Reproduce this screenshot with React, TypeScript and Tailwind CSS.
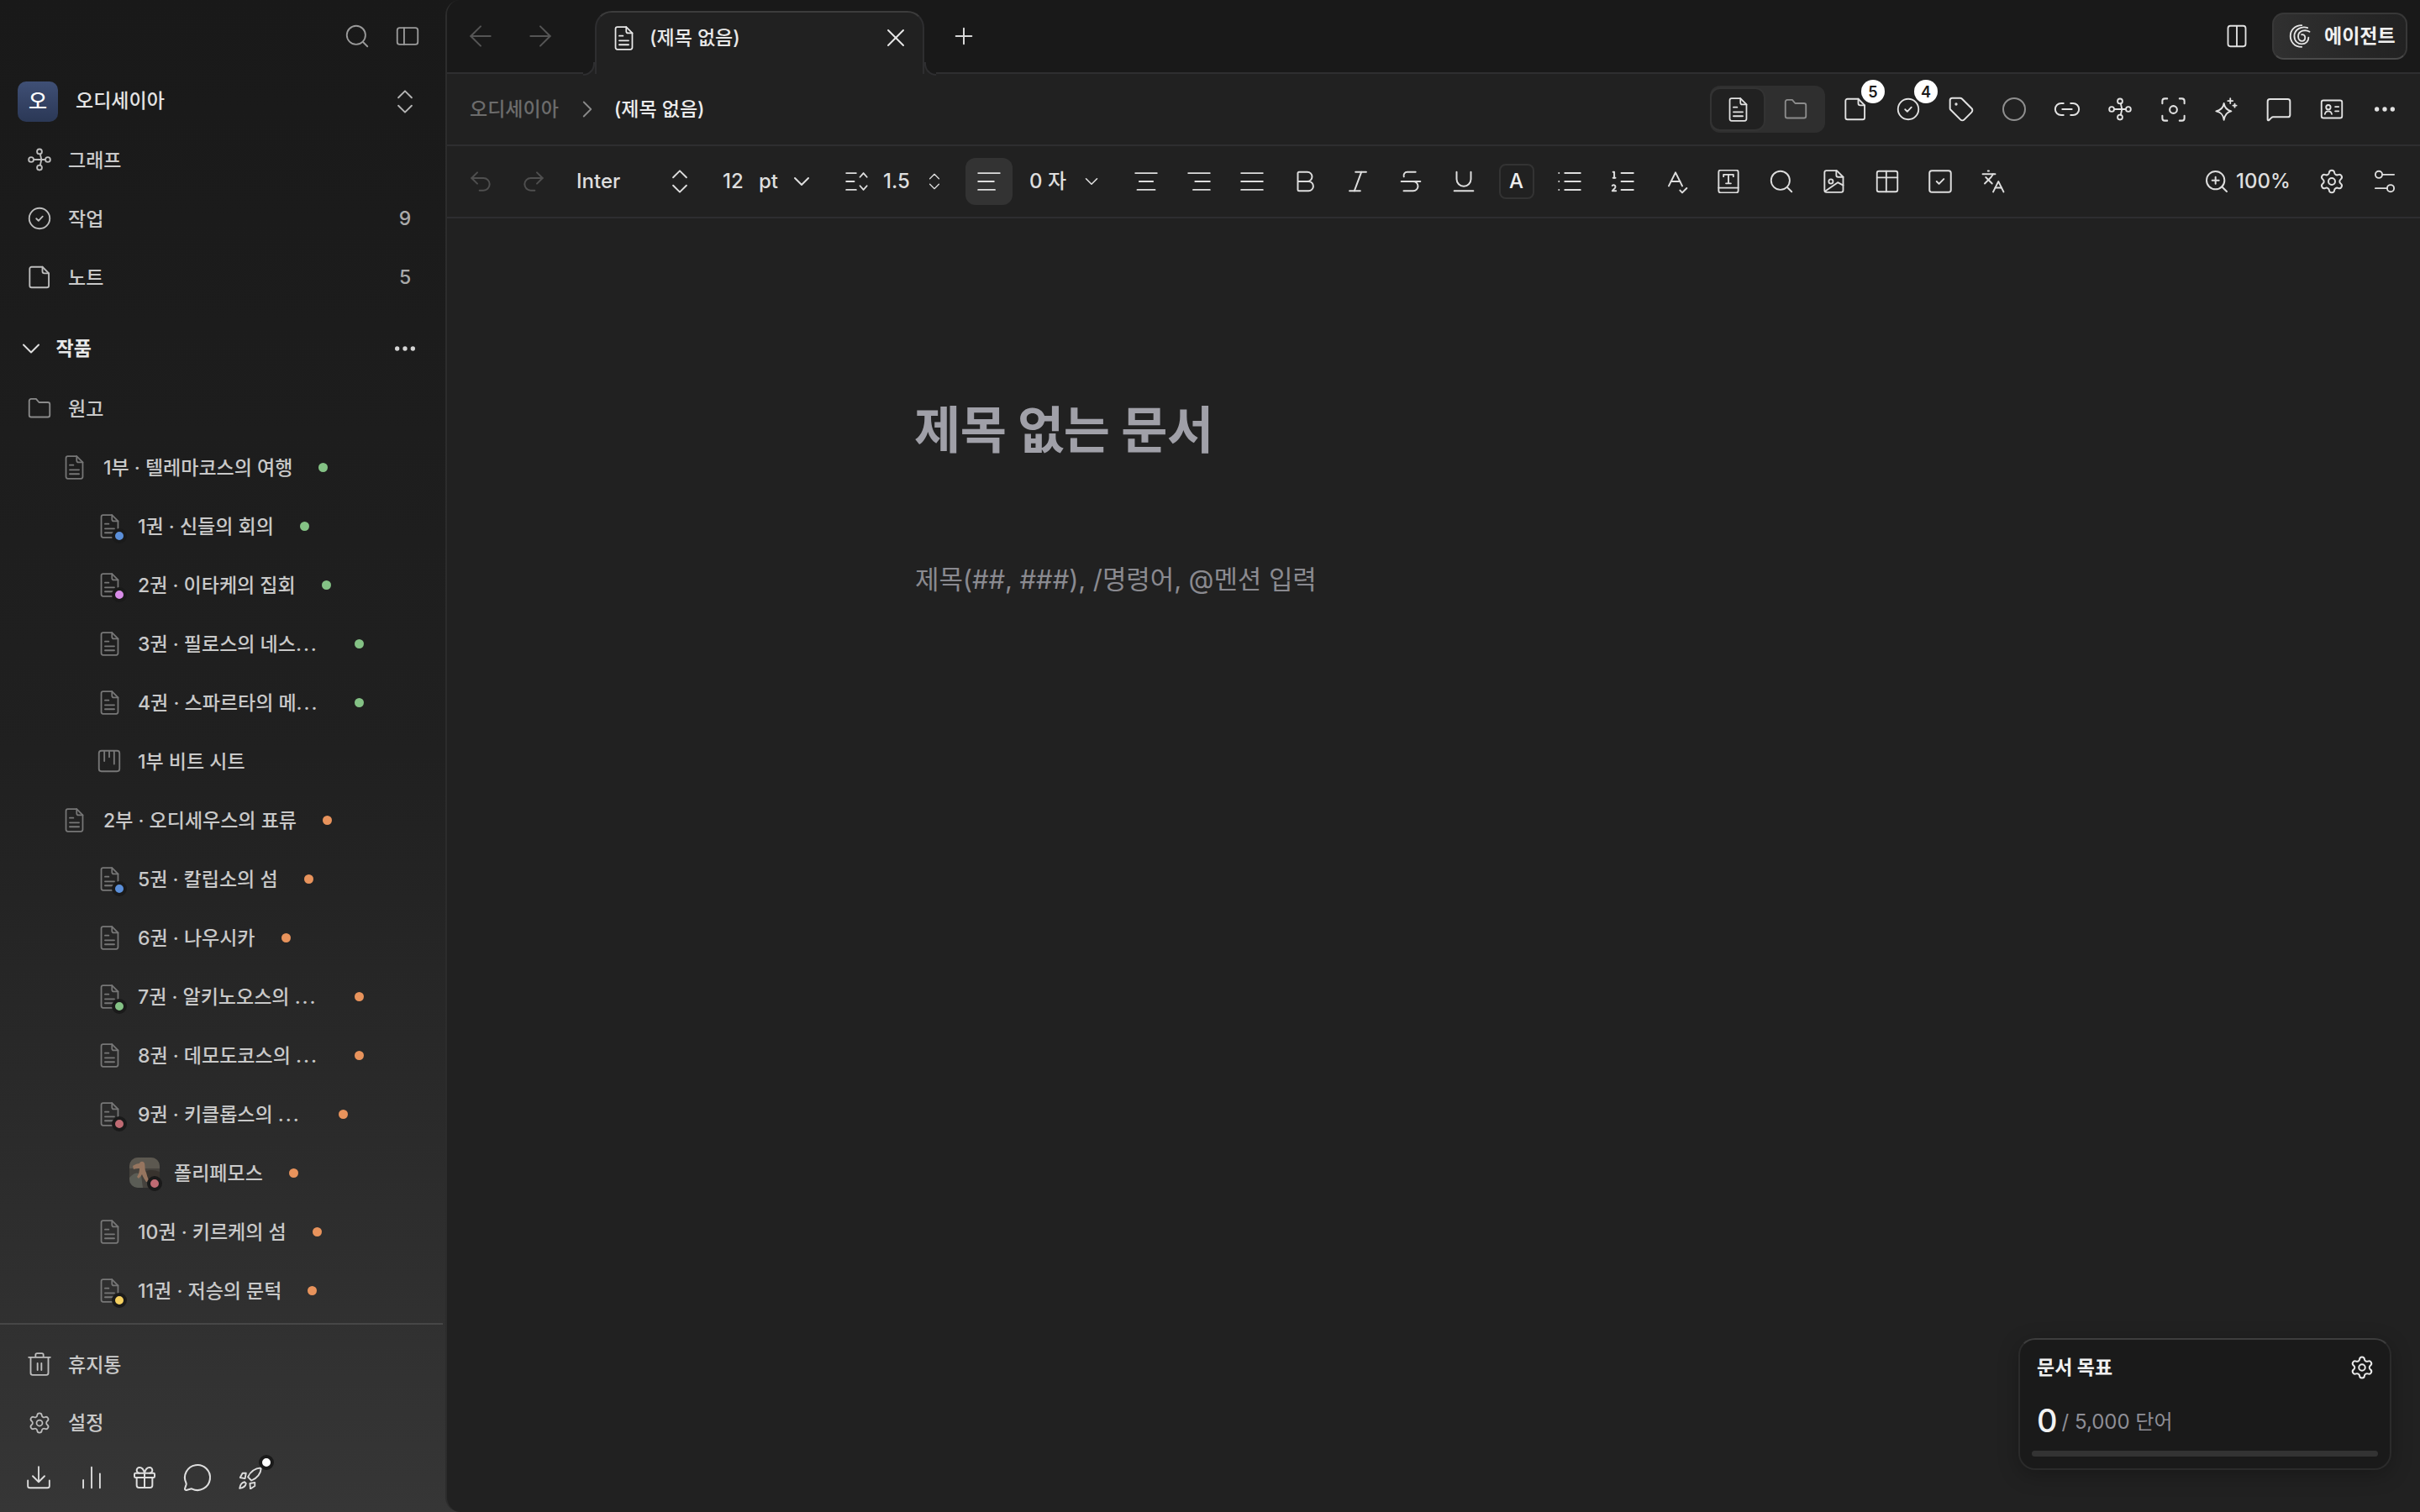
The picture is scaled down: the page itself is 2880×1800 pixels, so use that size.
import React from "react";
import {
  ArrowLeft,
  ArrowRight,
  Bold,
  ChevronDown,
  ChevronRight,
  ChevronsUpDown,
  Ellipsis,
  Focus,
  Gift,
  Italic,
  Languages,
  Link2,
  List,
  ListOrdered,
  MessageCircle,
  MessageSquare,
  Plus,
  Redo2,
  Settings,
  SpellCheck,
  SquareCheck,
  Strikethrough,
  Tag,
  Underline,
  Undo2,
  X,
  ZoomIn,
} from "lucide-react";

const Svg = ({ size = 28, className = "", vb = "0 0 24 24", children }: { size?: number; className?: string; vb?: string; children: React.ReactNode }) => (
  <svg width={size} height={size} viewBox={vb} fill="none" stroke="currentColor" strokeWidth={1.6} strokeLinecap="round" strokeLinejoin="round" className={`shrink-0 ${className}`}>
    {children}
  </svg>
);

const DocIcon = ({ className = "", size = 31 }: { className?: string; size?: number }) => (
  <Svg size={size} vb="0 0 24 28" className={className}>
    <path d="M5 2h9.500L21 8.500V24a2 2 0 0 1-2 2H5a2 2 0 0 1-2-2V4a2 2 0 0 1 2-2z" />
    <path d="M14.500 2v4.500a2 2 0 0 0 2 2H21" />
    <path d="M7 11.500h4M7 16.500h10M7 21h10" />
  </Svg>
);

const FileIcon = ({ className = "" }: { className?: string }) => (
  <Svg className={className}>
    <path d="M4 1.500h11L21.500 8v12.500a2 2 0 0 1-2 2H4a2 2 0 0 1-2-2v-17a2 2 0 0 1 2-2z" />
    <path d="M15 1.500V6a2 2 0 0 0 2 2h4.500" />
  </Svg>
);

const FolderIcon = ({ className = "" }: { className?: string }) => (
  <Svg className={className}>
    <path d="M1.500 4.500a2 2 0 0 1 2-2h5l3 3.500h9a2 2 0 0 1 2 2v11a2 2 0 0 1-2 2h-17a2 2 0 0 1-2-2z" />
  </Svg>
);

const CheckCircleIcon = ({ className = "" }: { className?: string }) => (
  <Svg className={className}>
    <circle cx="12" cy="12" r="10.500" />
    <path d="M8.800 12.200l2.200 2.200 4.200-4.400" />
  </Svg>
);

const GraphIcon = ({ className = "" }: { className?: string }) => (
  <Svg className={className}>
    <circle cx="12" cy="3.800" r="2.500" />
    <circle cx="3.500" cy="12" r="2.500" />
    <circle cx="20.500" cy="12" r="2.500" />
    <circle cx="12" cy="20.200" r="2.500" />
    <path d="M6 12h12M12.700 6.200l1.300 5.800-1.300 5.800" />
  </Svg>
);

const BeatIcon = ({ className = "" }: { className?: string }) => (
  <Svg className={className}>
    <rect x="1.500" y="1.500" width="21" height="21" rx="2.500" />
    <path d="M7 2v10M12 2v6M17 2v13" />
  </Svg>
);

const TrashIcon = ({ className = "" }: { className?: string }) => (
  <Svg className={className}>
    <path d="M1 5h22M8 5V2.500A1.500 1.500 0 0 1 9.500 1h5A1.500 1.500 0 0 1 16 2.500V5" />
    <path d="M3 5v16a2 2 0 0 0 2 2h14a2 2 0 0 0 2-2V5" />
    <path d="M10 11v7M14 11v7" />
  </Svg>
);

const DownloadIcon = ({ className = "" }: { className?: string }) => (
  <Svg className={className}>
    <path d="M12 1v15M6 10.500l6 6 6-6" />
    <path d="M1 15v5.500a2 2 0 0 0 2 2h18a2 2 0 0 0 2-2V15" />
  </Svg>
);

const BarsIcon = ({ className = "" }: { className?: string }) => (
  <Svg className={className}>
    <path d="M3.500 22.500v-8M12 22.500V1.500M20.500 22.500V8" />
  </Svg>
);

const RocketIcon = ({ className = "" }: { className?: string }) => (
  <Svg className={className}>
    <path d="M23 2c-6 .5-11 3.500-13.500 9.500l3.500 3.500c6-2.500 9.500-7 10-13z" />
    <path d="M7.500 7.500H4L1.500 12l5 1z" />
    <path d="M16.500 17v3.500L12 23.500 11.500 18z" />
    <path d="M6 16.500c-2.500.5-4.500 3-5 6.500 3.500-.5 6-2 6.500-5z" />
  </Svg>
);

const PanelIcon = ({ className = "" }: { className?: string }) => (
  <Svg className={className}>
    <rect x="1.500" y="3.500" width="21" height="17" rx="2.500" />
    <path d="M8.500 3.500v17" />
  </Svg>
);

const SearchIcon = ({ className = "" }: { className?: string }) => (
  <Svg className={className}>
    <circle cx="11" cy="11" r="9.500" />
    <path d="M18 18l4.500 4.500" />
  </Svg>
);

const AlignIcon = ({ kind, className = "" }: { kind: "left" | "center" | "right" | "justify"; className?: string }) => {
  const lines = {
    left: "M1 3.500h22M1 12h16M1 20.500h17",
    center: "M1 3.500h22M5 12h14M3 20.500h18",
    right: "M1 3.500h22M8 12h15M6 20.500h17",
    justify: "M1 3.500h22M1 12h22M1 20.500h22",
  };
  return (
    <Svg className={className}>
      <path d={lines[kind]} />
    </Svg>
  );
};

const LineSpacingIcon = ({ className = "" }: { className?: string }) => (
  <Svg className={className}>
    <path d="M1 3.500h10M1 12h8M1 20.500h10" />
    <path d="M15 7.500l3.500-4 3.500 4M15 16.500l3.500 4 3.500-4" />
  </Svg>
);

const BookTIcon = ({ className = "" }: { className?: string }) => (
  <Svg className={className}>
    <rect x="2" y="0.500" width="20" height="23" rx="2" />
    <path d="M2 18.500h20M7 5h10M7 5v2M17 5v2M12 5v9M9.500 14h5" />
  </Svg>
);

const ImageDocIcon = ({ className = "" }: { className?: string }) => (
  <Svg className={className}>
    <path d="M4 1h10.500L21 7.500V21a2 2 0 0 1-2 2H4a2 2 0 0 1-2-2V3a2 2 0 0 1 2-2z" />
    <path d="M14 1v4.500a2 2 0 0 0 2 2h5" />
    <circle cx="8.500" cy="12" r="2.200" />
    <path d="M2.500 22l13-9 5.500 3" />
  </Svg>
);

const TableIcon = ({ className = "" }: { className?: string }) => (
  <Svg className={className}>
    <rect x="1.500" y="1.500" width="21" height="21" rx="2" />
    <path d="M1.500 8h21M11 1.500v21" />
  </Svg>
);

const SlidersIcon = ({ className = "" }: { className?: string }) => (
  <Svg className={className}>
    <circle cx="6" cy="5" r="3.500" />
    <path d="M9.500 5h12" />
    <circle cx="18" cy="19" r="3.500" />
    <path d="M2.500 19h12" />
  </Svg>
);

const IdCardIcon = ({ className = "" }: { className?: string }) => (
  <Svg className={className}>
    <rect x="1.500" y="3" width="21" height="18" rx="2" />
    <circle cx="8.500" cy="10" r="2.300" />
    <path d="M5 17c.4-2 1.800-3 3.500-3s3.100 1 3.500 3M15.500 9.500h3.500M15.500 14h3.500" />
  </Svg>
);

const SparkleIcon = ({ className = "" }: { className?: string }) => (
  <Svg className={className}>
    <path d="M10 6c.7 4.500 2.800 7 7.500 8-4.700 1-6.800 3.500-7.500 9-.7-5.500-2.800-8-8-9 5.200-1 7.300-3.500 8-8z" />
    <path d="M16.500 1v5M14 3.500h5M21 6.500v3.500M19.200 8.200h3.600" />
  </Svg>
);

const SpiralIcon = ({ className = "" }: { className?: string }) => (
  <Svg className={className}>
    <path d="M13 23C5.500 23 1.500 17.500 1.500 12 1.500 6 6 1 13 1" />
    <path d="M19 3.500C13 1.500 5.500 5 5.500 12c0 5.500 4 8 7.500 8 4.500 0 7-3 7-6.500" />
    <path d="M21 7.500C17 5 9.500 6 9.500 12.500c0 3 2 4.500 3.800 4.500 2.200 0 3.200-1.800 3.200-3.500 0-2-1.500-3.500-3.500-3" />
  </Svg>
);

const Avatar = () => (
  <svg width="36" height="36" viewBox="0 0 36 36" className="rounded-[10px]">
    <rect width="36" height="36" fill="#45423d" />
    <rect width="36" height="13" fill="#5c5850" />
    <path d="M0 24c6-6 10-7 14-3l2 15H0z" fill="#5a5c55" />
    <path d="M20 16c5-2 11-1 16 1v19H22z" fill="#38332e" />
    <path d="M4 10c3-2 6-3 8-3 1-3 5-3 6 0 1 4 0 8 2 11 1 4 2 7 4 11h-4c-2-3-4-6-5-9-1 2-3 4-4 5l-2-2c2-3 3-6 3-10-2 0-5 0-7 1z" fill="#96755f" />
  </svg>
);

type Row = {
  label: string;
  level: 1 | 2 | 3;
  dot: string;
  badge?: string;
  icon?: "beat";
  boxClass?: string;
  more?: boolean;
};

const green = "bg-[#84c285]";
const orange = "bg-[#e8935c]";

const rows: Row[] = [
  { label: "1부 · 텔레마코스의 여행", level: 1, dot: green },
  { label: "1권 · 신들의 회의", level: 2, dot: green, badge: "bg-[#5b8fd9]" },
  { label: "2권 · 이타케의 집회", level: 2, dot: green, badge: "bg-[#d88ce8]" },
  { label: "3권 · 필로스의 네스", level: 2, dot: green, boxClass: "w-[227px]", more: true },
  { label: "4권 · 스파르타의 메", level: 2, dot: green, boxClass: "w-[227px]", more: true },
  { label: "1부 비트 시트", level: 2, dot: "", icon: "beat" },
  { label: "2부 · 오디세우스의 표류", level: 1, dot: orange },
  { label: "5권 · 칼립소의 섬", level: 2, dot: orange, badge: "bg-[#5b8fd9]" },
  { label: "6권 · 나우시카", level: 2, dot: orange },
  { label: "7권 · 알키노오스의 ", level: 2, dot: orange, badge: "bg-[#84c285]", boxClass: "w-[227px]", more: true },
  { label: "8권 · 데모도코스의 ", level: 2, dot: orange, boxClass: "w-[227px]", more: true },
  { label: "9권 · 키클롭스의 ", level: 2, dot: orange, badge: "bg-[#bf6b73]", boxClass: "w-[208px]", more: true },
  { label: "폴리페모스", level: 3, dot: orange, badge: "bg-[#bf6b73]" },
  { label: "10권 · 키르케의 섬", level: 2, dot: orange },
  { label: "11권 · 저승의 문턱", level: 2, dot: orange, badge: "bg-[#f5d060]" },
];

const Badge = ({ color, className }: { color: string; className: string }) => (
  <span className={`absolute h-[18px] w-[18px] rounded-full border-[4px] border-[#1a1a1a] ${color} ${className}`} />
);

const TreeRow = ({ row }: { row: Row }) => (
  <div className={`flex h-[70px] shrink-0 items-center ${row.level === 1 ? "pl-[74px]" : row.level === 2 ? "pl-[116px]" : "pl-[154px]"}`}>
    <span className={`relative flex shrink-0 justify-center ${row.level === 3 ? "mr-[17px] w-[36px]" : row.level === 1 ? "mr-[21px] w-[28px]" : "mr-[20px] w-[28px]"}`}>
      {row.level === 3 ? <Avatar /> : row.icon === "beat" ? <BeatIcon className="text-[#777]" /> : <DocIcon className="text-[#777]" />}
      {row.badge && <Badge color={row.badge} className={row.level === 3 ? "-bottom-[4px] -right-[3px]" : "-bottom-[5px] -right-[7px]"} />}
    </span>
    <span className={`whitespace-pre pt-[2px] text-[23px] font-medium text-[#c9c9c9] ${row.boxClass || ""}`}>
      {row.label}
      {row.more && <span className="tracking-[2px]">...</span>}
    </span>
    {row.dot && <span className={`ml-[31px] h-[11px] w-[11px] shrink-0 rounded-full ${row.dot}`} />}
  </div>
);

const NavRow = ({ icon, label, count, className = "h-[70px]" }: { icon: React.ReactNode; label: string; count?: string; className?: string }) => (
  <div className={`flex shrink-0 items-center pl-[33px] pr-[38px] ${className}`}>
    <span className="mr-[20px] flex w-[28px] justify-center text-[#bdbdbd]">{icon}</span>
    <span className="flex-1 pt-[2px] text-[23px] font-medium text-[#c9c9c9]">{label}</span>
    {count && <span className="w-[20px] text-center text-[23px] font-medium text-[#aaaaaa]">{count}</span>}
  </div>
);

const BottomSlot = ({ children }: { children: React.ReactNode }) => <span className="flex w-[63px] justify-center">{children}</span>;

const Sidebar = () => (
  <aside className="flex h-full w-[530px] shrink-0 flex-col">
    <div className="flex h-[86px] shrink-0 items-center justify-end gap-[32px] pr-[31px] text-[#9a9a9a]">
      <SearchIcon />
      <PanelIcon />
    </div>
    <div className="flex h-[69px] shrink-0 items-center pl-[21px] pr-[29px]">
      <span className="flex h-[48px] w-[48px] items-center justify-center rounded-[10px] bg-linear-to-b from-[#3f4f75] to-[#2b3856] text-[24px] font-medium text-white">오</span>
      <span className="ml-[21px] flex-1 text-[23px] font-medium text-[#e4e4e4]">오디세이아</span>
      <ChevronsUpDown size={38} strokeWidth={1.2} className="text-[#b5b5b5]" />
    </div>
    <NavRow icon={<GraphIcon />} label="그래프" />
    <NavRow icon={<CheckCircleIcon />} label="작업" count="9" />
    <NavRow icon={<FileIcon />} label="노트" count="5" />
    <div className="mt-[15px] flex h-[70px] shrink-0 items-center pl-[19px] pr-[32px]">
      <ChevronDown size={36} strokeWidth={1.3} className="text-[#e0e0e0]" />
      <span className="ml-[11.500px] flex-1 text-[23px] font-bold text-[#e8e8e8]">작품</span>
      <Ellipsis size={32} strokeWidth={2} className="text-[#d5d5d5]" />
    </div>
    <NavRow icon={<FolderIcon className="text-[#8a8a8a]" />} label="원고" className="mt-px h-[70px]" />
    {rows.map((row) => (
      <TreeRow key={row.label} row={row} />
    ))}
    <div className="mt-[4px] mr-[3px] h-[2px] shrink-0 bg-[#474747]" />
    <div className="mt-[12px] flex flex-col">
      <NavRow icon={<TrashIcon />} label="휴지통" />
      <NavRow icon={<Settings size={32} strokeWidth={1.5} />} label="설정" className="h-[69px]" />
    </div>
    <div className="mt-[13px] flex items-center pl-[14.500px] text-[#dddddd]">
      <BottomSlot>
        <DownloadIcon />
      </BottomSlot>
      <BottomSlot>
        <BarsIcon />
      </BottomSlot>
      <BottomSlot>
        <Gift size={32} strokeWidth={1.5} />
      </BottomSlot>
      <BottomSlot>
        <MessageCircle size={36} strokeWidth={1.4} />
      </BottomSlot>
      <BottomSlot>
        <span className="relative">
          <RocketIcon />
          <span className="absolute -right-[14px] -top-[13px] h-[18px] w-[18px] rounded-full border-[4px] border-[#1a1a1a] bg-white" />
        </span>
      </BottomSlot>
    </div>
  </aside>
);

const Tab = () => (
  <div className="relative z-10 -mb-[2px] ml-[45px] h-[75px] w-[392px] rounded-t-[20px] border-x-2 border-t-2 border-[#2e2e30] border-t-[#3c3c3c] bg-[#212121] pl-[17px] pr-[14px]">
    <div className="flex h-[60px] items-center">
      <DocIcon className="text-[#e8e8e8]" />
      <span className="ml-[15px] flex-1 text-[23px] font-medium text-[#e8e8e8]">(제목 없음)</span>
      <X size={36} strokeWidth={1.3} className="text-[#e8e8e8]" />
    </div>
    <span className="absolute -bottom-[2px] -left-[16px] h-[16px] w-[14px] bg-[#212121]">
      <span className="block h-full w-full rounded-br-[14px] border-b-2 border-r-2 border-[#2e2e30] bg-[#191919]" />
    </span>
    <span className="absolute -bottom-[2px] -right-[16px] h-[16px] w-[14px] bg-[#212121]">
      <span className="block h-full w-full rounded-bl-[14px] border-b-2 border-l-2 border-[#2e2e30] bg-[#191919]" />
    </span>
  </div>
);

const TabBar = () => (
  <div className="flex h-[88px] shrink-0 items-end border-b-2 border-[#2e2e30] bg-[#191919] pl-[20px] pr-[15px]">
    <div className="flex h-full items-center gap-[31px] text-[#555555]">
      <ArrowLeft size={40} strokeWidth={1.2} />
      <ArrowRight size={40} strokeWidth={1.2} />
    </div>
    <Tab />
    <div className="flex h-full items-center pl-[31px] text-[#d8d8d8]">
      <Plus size={32} strokeWidth={1.5} />
    </div>
    <div className="ml-auto flex h-full items-center gap-[28px]">
      <svg width="28" height="28" viewBox="0 0 24 24" fill="none" stroke="currentColor" strokeWidth={1.6} className="text-[#e0e0e0]">
        <rect x="3" y="1.500" width="18" height="21" rx="2.500" />
        <path d="M12 1.500v21" />
      </svg>
      <div className="flex h-[56px] w-[161px] items-center rounded-[14px] border-2 border-[#383838] border-b-[#4a4a4a] bg-linear-to-r from-[#303030] to-[#222222] pl-[18px]">
        <SpiralIcon className="text-[#e4e4e4]" />
        <span className="ml-[14px] whitespace-nowrap text-[23px] font-bold text-[#f0f0f0]">에이전트</span>
      </div>
    </div>
  </div>
);

const CountIcon = ({ n, children }: { n: string; children: React.ReactNode }) => (
  <span className="relative flex w-[63px] justify-center">
    {children}
    <span className="absolute -top-[21px] left-[38.500px] flex h-[28px] w-[28px] items-center justify-center rounded-full bg-white text-[18px] font-semibold text-[#1a1a1a]">{n}</span>
  </span>
);

const Slot = ({ children }: { children: React.ReactNode }) => <span className="flex w-[63px] justify-center">{children}</span>;

const Breadcrumb = () => (
  <div className="flex h-[86px] shrink-0 items-center border-b-2 border-[#2e2e30] pl-[27px] pr-[10.500px]">
    <span className="text-[23px] font-medium text-[#6c6c6c]">오디세이아</span>
    <ChevronRight size={34} strokeWidth={1.3} className="ml-[17px] mr-[15px] text-[#8a8a8a]" />
    <span className="text-[23px] font-medium text-[#ececec]">(제목 없음)</span>
    <div className="ml-auto flex items-center text-[#e2e2e2]">
      <div className="mr-[4.500px] flex h-[56px] w-[137px] items-center rounded-[12px] bg-[#2f2f2f]">
        <span className="flex h-[52px] w-[66px] items-center justify-center rounded-[12px] border-2 border-[#333333] bg-[#212121]">
          <DocIcon />
        </span>
        <span className="flex w-[71px] justify-center">
          <FolderIcon className="text-[#8c8c8c]" />
        </span>
      </div>
      <CountIcon n="5">
        <FileIcon />
      </CountIcon>
      <CountIcon n="4">
        <CheckCircleIcon />
      </CountIcon>
      <Slot>
        <Tag size={32} strokeWidth={1.5} />
      </Slot>
      <Slot>
        <span className="h-[28px] w-[28px] rounded-full border-2 border-[#8f8f8f]" />
      </Slot>
      <Slot>
        <Link2 size={34} strokeWidth={1.4} />
      </Slot>
      <Slot>
        <GraphIcon />
      </Slot>
      <Slot>
        <Focus size={35} strokeWidth={1.4} />
      </Slot>
      <Slot>
        <SparkleIcon />
      </Slot>
      <Slot>
        <MessageSquare size={32} strokeWidth={1.5} />
      </Slot>
      <Slot>
        <IdCardIcon />
      </Slot>
      <Slot>
        <Ellipsis size={32} strokeWidth={2} />
      </Slot>
    </div>
  </div>
);

const ToolSlot = ({ children }: { children: React.ReactNode }) => <span className="flex w-[63px] shrink-0 justify-center">{children}</span>;

const Toolbar = () => (
  <div className="flex h-[86px] shrink-0 items-center border-b-2 border-[#2e2e30] pl-[8.500px] pr-[10px] text-[24px] font-medium text-[#dedede]">
    <ToolSlot>
      <Undo2 size={32} strokeWidth={1.5} className="text-[#4f4f4f]" />
    </ToolSlot>
    <ToolSlot>
      <Redo2 size={32} strokeWidth={1.5} className="text-[#4f4f4f]" />
    </ToolSlot>
    <span className="ml-[19.500px] w-[104px]">Inter</span>
    <span className="flex w-[38px] justify-center">
      <ChevronsUpDown size={38} strokeWidth={1.2} />
    </span>
    <span className="ml-[32px] w-[43px]">12</span>
    <span className="w-[33px]">pt</span>
    <span className="flex w-[36px] justify-center">
      <ChevronDown size={32} strokeWidth={1.5} />
    </span>
    <span className="ml-[32px] flex w-[32px] justify-center">
      <LineSpacingIcon />
    </span>
    <span className="ml-[15px] w-[48px]">1.5</span>
    <span className="flex w-[26px] justify-center">
      <ChevronsUpDown size={38} strokeWidth={1.2} />
    </span>
    <span className="ml-[24px] flex h-[56px] w-[56px] items-center justify-center rounded-[12px] bg-[#333333]">
      <AlignIcon kind="left" />
    </span>
    <span className="ml-[20px] w-[61px] whitespace-nowrap">0 자</span>
    <span className="flex w-[26px] justify-center">
      <ChevronDown size={32} strokeWidth={1.5} />
    </span>
    <span className="ml-[20px] flex items-center">
      <ToolSlot>
        <AlignIcon kind="center" />
      </ToolSlot>
      <ToolSlot>
        <AlignIcon kind="right" />
      </ToolSlot>
      <ToolSlot>
        <AlignIcon kind="justify" />
      </ToolSlot>
      <ToolSlot>
        <Bold size={34} strokeWidth={1.4} />
      </ToolSlot>
      <ToolSlot>
        <Italic size={34} strokeWidth={1.4} />
      </ToolSlot>
      <ToolSlot>
        <Strikethrough size={34} strokeWidth={1.4} />
      </ToolSlot>
      <ToolSlot>
        <Underline size={34} strokeWidth={1.4} />
      </ToolSlot>
      <ToolSlot>
        <span className="flex h-[42px] w-[42px] items-center justify-center rounded-[8px] border-2 border-[#333333] text-[24px] font-medium text-[#efefef]">A</span>
      </ToolSlot>
      <ToolSlot>
        <List size={34} strokeWidth={1.4} />
      </ToolSlot>
      <ToolSlot>
        <ListOrdered size={34} strokeWidth={1.4} />
      </ToolSlot>
      <ToolSlot>
        <SpellCheck size={32} strokeWidth={1.5} />
      </ToolSlot>
      <ToolSlot>
        <BookTIcon />
      </ToolSlot>
      <ToolSlot>
        <SearchIcon />
      </ToolSlot>
      <ToolSlot>
        <ImageDocIcon />
      </ToolSlot>
      <ToolSlot>
        <TableIcon />
      </ToolSlot>
      <ToolSlot>
        <SquareCheck size={34} strokeWidth={1.4} />
      </ToolSlot>
      <ToolSlot>
        <Languages size={30} strokeWidth={1.5} />
      </ToolSlot>
    </span>
    <span className="ml-auto flex items-center">
      <span className="flex w-[32px] justify-center">
        <ZoomIn size={32} strokeWidth={1.5} />
      </span>
      <span className="ml-[7px] mr-[20px] w-[63px]">100%</span>
      <span className="flex w-[62px] justify-center">
        <Settings size={32} strokeWidth={1.5} />
      </span>
      <span className="flex w-[64px] justify-center">
        <SlidersIcon />
      </span>
    </span>
  </div>
);

const GoalCard = () => (
  <div className="absolute bottom-[50px] right-[34px] flex h-[157px] w-[444px] flex-col rounded-[20px] border-2 border-[#2b2b2b] border-t-[#3d3d3d] bg-[#1a1a1a] px-[14px] pt-[16px] shadow-[0_6px_24px_rgba(0,0,0,0.25)]">
    <div className="flex h-[34px] items-center justify-between pl-[6px] pr-[4px]">
      <span className="text-[23px] font-bold text-[#f0f0f0]">문서 목표</span>
      <Settings size={30} strokeWidth={1.6} className="text-[#eaeaea]" />
    </div>
    <div className="mt-[24px] flex h-[44px] items-end pl-[6px]">
      <span className="text-[38px] font-medium leading-[44px] text-[#f2f2f2]">0</span>
      <span className="ml-[5px] pb-[2px] text-[24px] text-[#8e8e96]">/ 5,000 단어</span>
    </div>
    <div className="mt-[14px] h-[7px] rounded-full bg-[#333333]" />
  </div>
);

const App = () => (
  <div className="flex h-screen w-screen overflow-hidden bg-linear-to-b from-[#191919] via-[#202020] to-[#363636] [font-family:Inter,'Noto_Sans_CJK_KR',sans-serif]">
    <Sidebar />
    <main className="relative flex h-full flex-1 flex-col overflow-hidden rounded-l-[18px] border-l-2 border-[#2c2c2c] bg-[#212121]">
      <TabBar />
      <Breadcrumb />
      <Toolbar />
      <div className="flex flex-1 flex-col pl-[556px]">
        <h1 className="mt-[210px] text-[60px] font-bold leading-[84px] tracking-[-0.5px] text-[#a0a0a8]">제목 없는 문서</h1>
        <p className="mt-[114px] pl-[1px] text-[31px] leading-[44px] tracking-[-0.1px] text-[#8a8a90]">제목(##, ###), /명령어, @멘션 입력</p>
      </div>
      <GoalCard />
    </main>
  </div>
);

export default App;
